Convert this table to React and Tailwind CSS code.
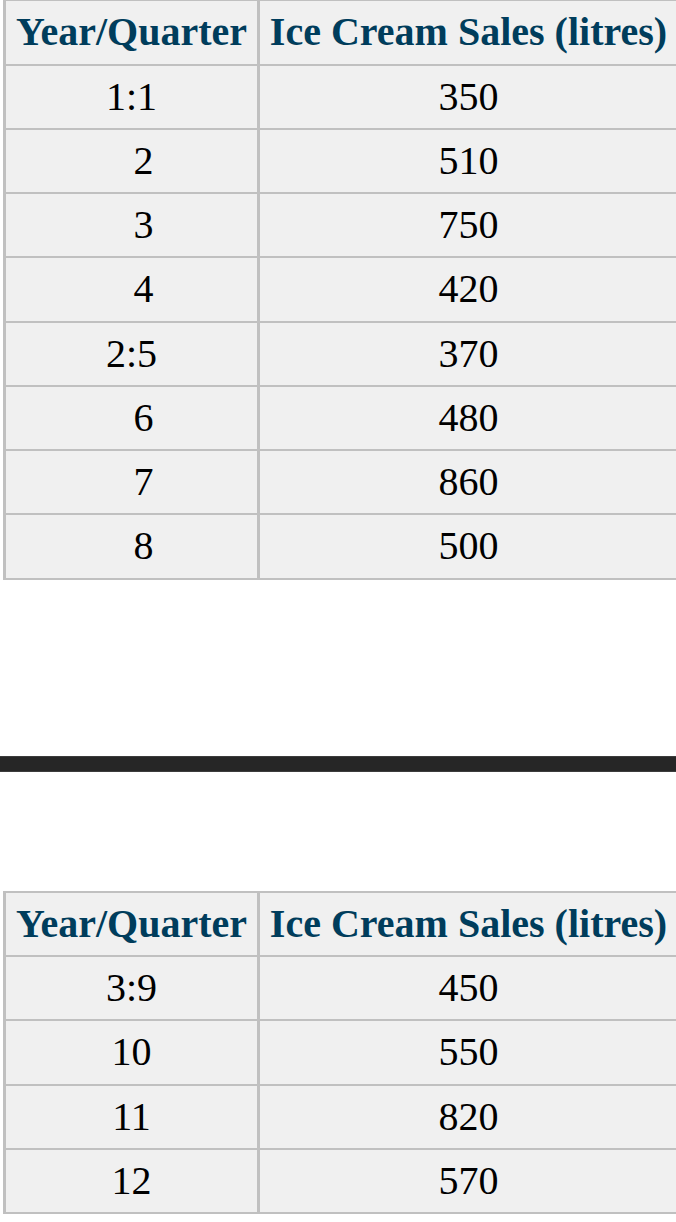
const firstYear = [
  { q: "1:1", sales: "350" },
  { q: "2", sales: "510", indent: true },
  { q: "3", sales: "750", indent: true },
  { q: "4", sales: "420", indent: true },
  { q: "2:5", sales: "370" },
  { q: "6", sales: "480", indent: true },
  { q: "7", sales: "860", indent: true },
  { q: "8", sales: "500", indent: true },
];

const thirdYear = [
  { q: "3:9", sales: "450" },
  { q: "10", sales: "550" },
  { q: "11", sales: "820" },
  { q: "12", sales: "570" },
];

function SalesTable({ rows }) {
  return (
    <table className="w-[676px] ml-[3px] border-collapse bg-[#f0f0f0] border-l-[3px] border-[#c0c0c0] font-['Liberation_Serif','Times_New_Roman',serif]">
      <thead>
        <tr>
          <th className="w-[254px] h-[64.5px] p-0 border-2 border-r-[3px] border-[#c0c0c0] text-[40px] font-bold text-[#003d5c] text-center leading-none">
            Year/Quarter
          </th>
          <th className="h-[64.5px] p-0 border-2 border-[#c0c0c0] text-[40px] font-bold text-[#003d5c] text-center leading-none">
            Ice Cream Sales (litres)
          </th>
        </tr>
      </thead>
      <tbody>
        {rows.map((row) => (
          <tr key={row.q}>
            <td className={"h-[64.25px] p-0 border-2 border-r-[3px] border-[#c0c0c0] text-center text-[40px] leading-none " + (row.indent ? "pl-6" : "")}>
              {row.q}
            </td>
            <td className="h-[64.25px] p-0 border-2 border-[#c0c0c0] text-center text-[40px] leading-none">
              {row.sales}
            </td>
          </tr>
        ))}
      </tbody>
    </table>
  );
}

export default function App() {
  return (
    <div className="w-[676px] h-[1222px] overflow-hidden bg-white text-black font-['Liberation_Serif','Times_New_Roman',serif]">
      <div className="-mt-[1px]">
        <SalesTable rows={firstYear} />
      </div>
      <div className="mt-[176px] h-[16px] bg-[#262626] border-y border-[#3c3c3c]" />
      <div className="mt-[119px]">
        <SalesTable rows={thirdYear} />
      </div>
    </div>
  );
}
